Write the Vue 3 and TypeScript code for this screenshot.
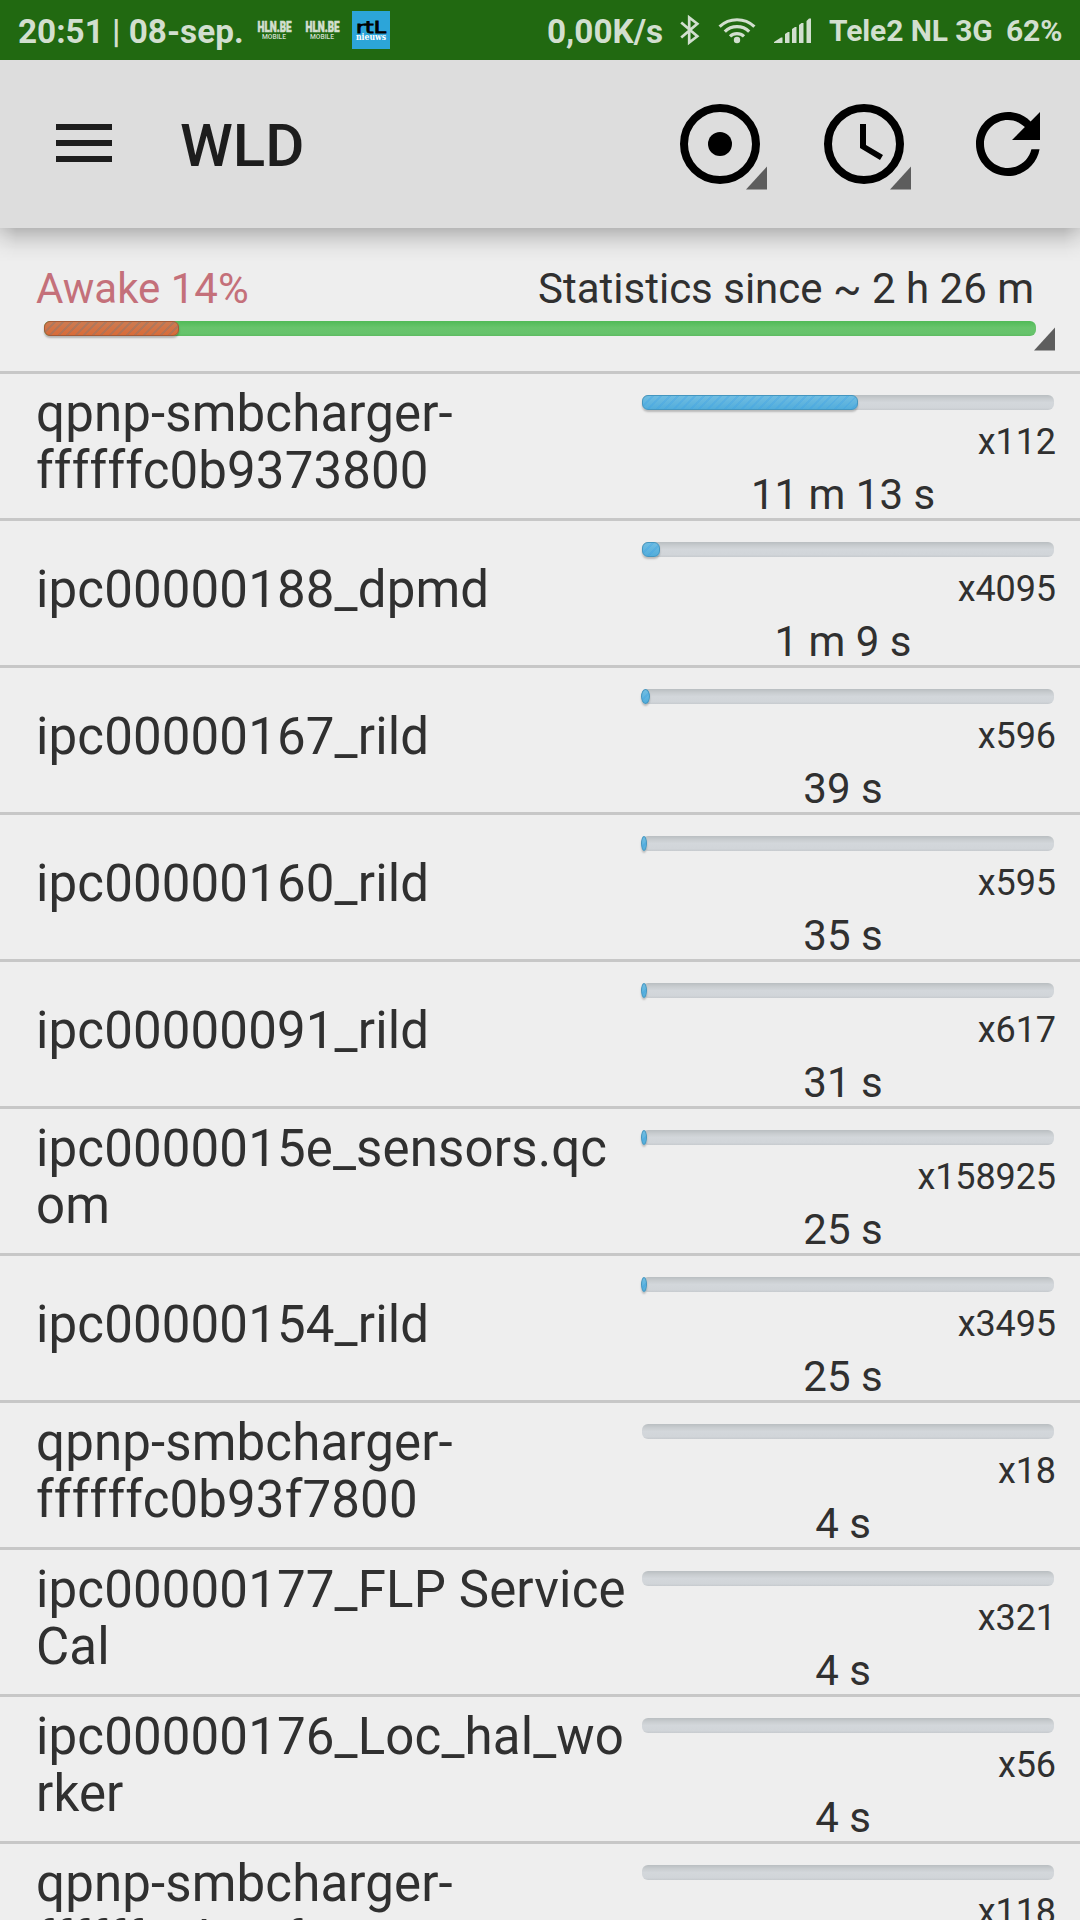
<script setup lang="ts">
interface Wakelock {
  name: string
  count: string
  time: string
  fill: number
}

const wakelocks: Wakelock[] = [
  { name: 'qpnp-smbcharger-ffffffc0b9373800', count: 'x112', time: '11 m 13 s', fill: 216 },
  { name: 'ipc00000188_dpmd', count: 'x4095', time: '1 m 9 s', fill: 18 },
  { name: 'ipc00000167_rild', count: 'x596', time: '39 s', fill: 9 },
  { name: 'ipc00000160_rild', count: 'x595', time: '35 s', fill: 6 },
  { name: 'ipc00000091_rild', count: 'x617', time: '31 s', fill: 6 },
  { name: 'ipc0000015e_sensors.qcom', count: 'x158925', time: '25 s', fill: 6 },
  { name: 'ipc00000154_rild', count: 'x3495', time: '25 s', fill: 6 },
  { name: 'qpnp-smbcharger-ffffffc0b93f7800', count: 'x18', time: '4 s', fill: 0 },
  { name: 'ipc00000177_FLP Service Cal', count: 'x321', time: '4 s', fill: 0 },
  { name: 'ipc00000176_Loc_hal_worker', count: 'x56', time: '4 s', fill: 0 },
  { name: 'qpnp-smbcharger-ffffffc0b93f4800', count: 'x118', time: '4 s', fill: 0 },
]
</script>

<template>
  <div class="screen">
    <header class="status">
      <span class="clock">20:51 | 08-sep.</span>
      <svg v-for="n in 2" :key="n" class="hln" width="36" height="24" viewBox="0 0 36 24">
        <text class="hln-top" x="0.500" y="13.500" textLength="34" lengthAdjust="spacingAndGlyphs">HLN.BE</text>
        <text class="hln-sub" x="5" y="21.300" textLength="24" lengthAdjust="spacingAndGlyphs">MOBILE</text>
      </svg>
      <svg class="rtl" width="38" height="38" viewBox="0 0 38 38">
        <rect width="38" height="38" fill="#2ca5d9" />
        <text class="rtl-top" x="4" y="21.500" textLength="30" lengthAdjust="spacingAndGlyphs">rtL</text>
        <text class="rtl-sub" x="4" y="29" textLength="30" lengthAdjust="spacingAndGlyphs">nieuws</text>
      </svg>
      <span class="speed">0,00K/s</span>
      <svg class="bt" width="20" height="30" viewBox="0 0 20 30" fill="none" stroke="#d2dfcf" stroke-width="2.7">
        <path d="M1.2 7.5 17.3 21.3 9.2 27.6V2.4L17.3 8.7 1.2 22.5" />
      </svg>
      <svg class="wifi" width="38" height="28" viewBox="0 0 38 28" fill="none" stroke="#d2dfcf" stroke-width="3.2">
        <path d="M1.6 10.6a25.5 25.5 0 0 1 34.8 0M6.8 15.6a17.6 17.6 0 0 1 24.4 0M12 20.4a10.2 10.2 0 0 1 14 0" />
        <circle cx="19" cy="24" r="3.2" fill="#d2dfcf" stroke="none" />
      </svg>
      <svg class="signal" width="38" height="26" viewBox="0 0 38 26" fill="#d2dfcf">
        <path d="M0 25v-1l7-4.500h1.500V25zM11 25V16l3-2h1.500V25zM18 25V11l3-2h1.500V25zM25 25V7l2.500-2H29.500V25zM32.500 25V3l2.500-2.500H37V25z" />
      </svg>
      <span class="carrier">Tele2 NL 3G</span>
      <span class="battery">62%</span>
    </header>

    <nav class="appbar">
      <div class="menu"><i /><i /><i /></div>
      <h1>WLD</h1>
      <div class="action">
        <svg width="96" height="96" viewBox="0 0 24 24">
          <circle cx="12" cy="12" r="9" fill="none" stroke="#000" stroke-width="2" />
          <circle cx="12" cy="12" r="3" />
        </svg>
        <svg class="corner" width="22" height="24" viewBox="0 0 22 24"><path d="M0 23.500 21 .5V23.500z" fill="#5d5d5d" /></svg>
      </div>
      <div class="action">
        <svg width="96" height="96" viewBox="0 0 24 24">
          <circle cx="12" cy="12" r="9" fill="none" stroke="#000" stroke-width="2" />
          <path d="M11 7h1.500v5.250l4.250 2.520-.75 1.230L11 13z" />
        </svg>
        <svg class="corner" width="22" height="24" viewBox="0 0 22 24"><path d="M0 23.500 21 .5V23.500z" fill="#5d5d5d" /></svg>
      </div>
      <div class="action">
        <svg width="96" height="96" viewBox="0 0 24 24">
          <path d="M17.650 6.350C16.200 4.900 14.210 4 12 4c-4.420 0-8 3.580-8 8s3.580 8 8 8c3.970 0 7.260-2.890 7.890-6.660H17.850c-.63 2.670-2.990 4.660-5.850 4.660-3.310 0-6-2.690-6-6s2.690-6 6-6c1.660 0 3.140.69 4.220 1.780L13 11h7V4z" />
        </svg>
      </div>
      <div class="shadow" />
    </nav>

    <section class="summary">
      <div class="labels">
        <span class="awake">Awake 14%</span>
        <span class="since">Statistics since ~ 2 h 26 m</span>
      </div>
      <div class="total"><div class="total-awake" /></div>
      <svg class="total-corner" width="22" height="24" viewBox="0 0 22 24"><path d="M0 23.500 21 .5V23.500z" fill="#5d5d5d" /></svg>
    </section>

    <main>
      <article v-for="w in wakelocks" :key="w.name" class="row">
        <div class="name"><span>{{ w.name }}</span></div>
        <div class="stats">
          <div class="track">
            <div v-if="w.fill" class="fill" :class="{ sliver: w.fill < 12 }" :style="{ width: w.fill + 'px' }" />
          </div>
          <div class="count">{{ w.count }}</div>
          <div class="time">{{ w.time }}</div>
        </div>
      </article>
    </main>
  </div>
</template>

<style>
body {
  background: #eee;
  overflow: hidden;
}
</style>

<style scoped>
.screen {
  width: 1080px;
  height: 1920px;
  overflow: hidden;
  background: #eee;
  color: #303030;
  font-family: Roboto, sans-serif;
  font-variant-ligatures: none;
}
.status {
  display: flex;
  height: 60px;
  background: #216911;
  color: #d2dfcf;
  font-weight: 700;
  white-space: nowrap;
}
.status > * {
  flex: none;
}
.status svg {
  overflow: visible;
}
.clock {
  width: 240px;
  box-sizing: border-box;
  padding-left: 18px;
  font-size: 33.3px;
  line-height: 63px;
}
.hln {
  margin: 18px 0 0 17px;
  fill: #d2dfcf;
}
.hln + .hln {
  margin-left: 12px;
}
.hln-top {
  font: 900 15.5px Roboto, sans-serif;
  stroke: #d2dfcf;
  stroke-width: 0.7px;
}
.hln-sub {
  font: 500 7.6px Roboto, sans-serif;
}
.rtl {
  margin: 11px 0 0 11px;
}
.rtl-top {
  font: 400 16px "DejaVu Sans", sans-serif;
  stroke: #000;
  stroke-width: 0.8px;
}
.rtl-sub {
  font: 700 10px "DejaVu Serif", serif;
  fill: #fff;
}
.speed {
  width: 116px;
  margin-left: 157px;
  font-size: 33.3px;
  line-height: 63px;
}
.bt {
  margin: 15px 0 0 17px;
}
.wifi {
  margin: 16px 0 0 18px;
}
.signal {
  margin: 18px 0 0 18px;
}
.carrier {
  width: 161px;
  margin-left: 17px;
  font-size: 30px;
  line-height: 61px;
  letter-spacing: -0.1px;
}
.battery {
  margin-left: 16px;
  font-size: 30px;
  line-height: 61px;
  letter-spacing: -0.1px;
}
.appbar {
  position: relative;
  display: flex;
  height: 168px;
  background: #ddd;
}
.menu {
  display: flex;
  flex-direction: column;
  gap: 10px;
  width: 56px;
  margin: 64px 0 0 56px;
}
.menu i {
  height: 6px;
  background: #1d1d1d;
}
h1 {
  flex: 1;
  margin: 0 0 0 68px;
  font-size: 60px;
  font-weight: 500;
  line-height: 172px;
  color: #1d1d1d;
}
.action {
  position: relative;
  width: 96px;
  height: 96px;
  margin: 36px 24px 0 24px;
}
.action svg {
  display: block;
}
.action .corner {
  position: absolute;
  left: 74px;
  top: 70px;
}
.shadow {
  position: absolute;
  left: 0;
  right: 0;
  top: 168px;
  height: 34px;
  background: linear-gradient(rgba(0, 0, 0, 0.23), rgba(0, 0, 0, 0.1) 36%, rgba(0, 0, 0, 0.03) 65%, transparent);
  mask-image: linear-gradient(90deg, rgba(0, 0, 0, 0.55), #000 16px, #000 1064px, rgba(0, 0, 0, 0.55));
}
.summary {
  position: relative;
  box-sizing: border-box;
  height: 146px;
  padding: 37px 44px 0;
  border-bottom: 3px solid #c7c7c7;
}
.labels {
  display: flex;
  justify-content: space-between;
  height: 56px;
  margin: 0 2px 0 -8px;
  font-size: 42px;
  line-height: 48px;
}
.awake {
  color: #c4707a;
}
.total {
  height: 15px;
  border-radius: 6px;
  background: linear-gradient(#50ba57, #68c46c 45%, #66c36b 85%, #5dba61);
}
.total-awake {
  box-sizing: border-box;
  width: 135px;
  height: 15px;
  border: 1px solid #a65a35;
  border-radius: 6px;
  background: repeating-linear-gradient(135deg, rgba(120, 120, 120, 0.35) 0 2px, transparent 2px 6px), linear-gradient(#cc7b52, #d96b38);
  box-shadow: 0 2px 2px rgba(0, 0, 0, 0.25);
}
.total-corner {
  position: absolute;
  left: 1034px;
  top: 99px;
}
.row {
  display: flex;
  box-sizing: border-box;
  height: 147px;
  border-bottom: 3px solid #c7c7c7;
}
.name {
  display: flex;
  align-items: center;
  width: 606px;
  margin-left: 36px;
  padding-bottom: 8px;
  font-size: 51px;
  line-height: 57px;
  letter-spacing: 0.14px;
}
.name span {
  width: 594px;
  overflow-wrap: anywhere;
}
.stats {
  width: 414px;
  padding-top: 21px;
}
.track {
  width: 412px;
  height: 15px;
  border-radius: 6px;
  background: linear-gradient(#b9bec1, #c9cdd0 25%, #d3d7db 50%, #d1d5d9 85%, #c6cace);
}
.fill {
  box-sizing: border-box;
  height: 15px;
  border: 1px solid #4496bf;
  border-radius: 6px;
  background: repeating-linear-gradient(135deg, rgba(60, 160, 230, 0.3) 0 2px, transparent 2px 6px), linear-gradient(#70bde2, #52addb);
  box-shadow: 0 2px 2px rgba(0, 0, 0, 0.22);
}
.fill.sliver {
  margin-left: -1px;
  border-radius: 50%;
}
.count {
  height: 53px;
  font-size: 36px;
  line-height: 64px;
  text-align: right;
  letter-spacing: -0.1px;
}
.time {
  width: 402px;
  margin-top: 7px;
  font-size: 42px;
  line-height: 50px;
  text-align: center;
}
</style>
